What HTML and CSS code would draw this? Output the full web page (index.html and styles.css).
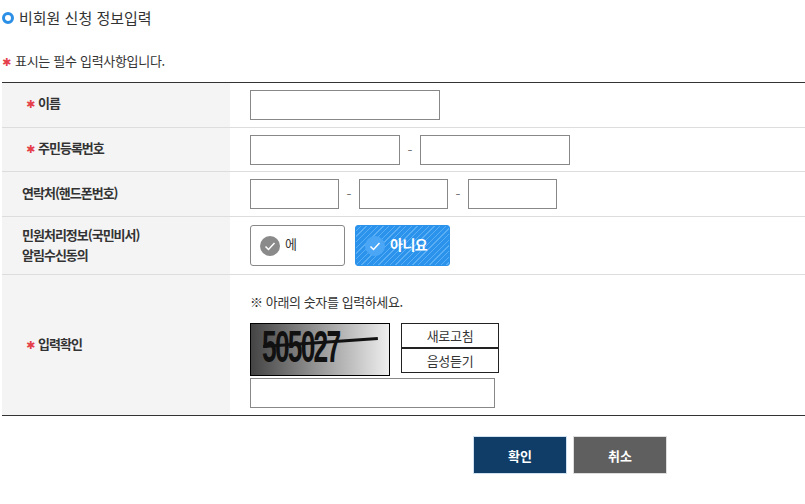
FILE: index.html
```html
<!DOCTYPE html>
<html lang="ko">
<head>
    <meta charset="UTF-8">
    <meta name="viewport" content="width=device-width, initial-scale=1.0">
    <title>비회원 신청 정보입력</title>
    <link rel="stylesheet" href="styles.css">
</head>
<body>
    <h2 class="title"><span class="dot"></span>비회원 신청 정보입력</h2>
    <p class="notice"><span class="star">✱</span>표시는 필수 입력사항입니다.</p>

    <table class="form">
        <tr class="row-name">
            <th class="indent"><span class="star">✱</span>이름</th>
            <td><input type="text" class="field w190"></td>
        </tr>
        <tr class="row-id">
            <th class="indent"><span class="star">✱</span>주민등록번호</th>
            <td>
                <div class="group">
                    <input type="text" class="field w150">
                    <span class="dash">-</span>
                    <input type="text" class="field w150">
                </div>
            </td>
        </tr>
        <tr class="row-phone">
            <th>연락처(핸드폰번호)</th>
            <td>
                <div class="group">
                    <input type="text" class="field w89">
                    <span class="dash">-</span>
                    <input type="text" class="field w89">
                    <span class="dash">-</span>
                    <input type="text" class="field w89">
                </div>
            </td>
        </tr>
        <tr class="row-agree">
            <th>민원처리정보(국민비서)<br>알림수신동의</th>
            <td>
                <div class="choices">
                    <div class="choice">
                        <svg class="check" width="20" height="20" viewBox="0 0 20 20">
                            <circle cx="10" cy="10" r="10" fill="#8a8a8a"/>
                            <path d="M5.5 10.5l3 3 6-6.500" fill="none" stroke="#fff" stroke-width="1.500"/>
                        </svg>
                        <span>에</span>
                    </div>
                    <div class="choice on">
                        <svg class="check" width="20" height="20" viewBox="0 0 20 20">
                            <circle cx="10" cy="10" r="10" fill="#4ba6f5"/>
                            <path d="M5.5 10.5l3 3 6-6.500" fill="none" stroke="#fff" stroke-width="1.500"/>
                        </svg>
                        <span>아니요</span>
                    </div>
                </div>
            </td>
        </tr>
        <tr class="row-captcha">
            <th class="indent"><span class="star">✱</span>입력확인</th>
            <td class="captcha-cell">
                <p class="hint">※ 아래의 숫자를 입력하세요.</p>
                <div class="captcha-row">
                    <div class="captcha">
                        <span class="digits">505027</span>
                        <span class="strike"></span>
                    </div>
                    <div class="captcha-btns">
                        <button>새로고침</button>
                        <button>음성듣기</button>
                    </div>
                </div>
                <input type="text" class="field w245">
            </td>
        </tr>
    </table>

    <div class="actions">
        <button class="btn ok">확인</button>
        <button class="btn cancel">취소</button>
    </div>
</body>
</html>
```

FILE: styles.css
```css
body {
    margin: 0;
    font-family: "Noto Sans CJK KR", "Noto Sans", sans-serif;
    background-color: #fff;
    color: #333;
}
.title {
    display: flex;
    align-items: center;
    margin: 0;
    padding: 3px 0 0 2px;
    height: 30px;
    font-size: 15px;
    font-weight: 400;
    line-height: 22px;
}
.dot {
    width: 6px;
    height: 6px;
    margin-right: 5px;
    border: 3px solid #2b8fe6;
    border-radius: 50%;
}
.notice {
    margin: 0;
    padding: 18px 0 0 2px;
    height: 31px;
    font-size: 13px;
    letter-spacing: -0.3px;
    line-height: 20px;
}
.star {
    display: inline-block;
    width: 12px;
    color: #e5404a;
    font-family: "DejaVu Sans", sans-serif;
    font-size: 11px;
    font-weight: 700;
    line-height: 11px;
}
.notice .star {
    width: 13px;
}
.form {
    width: 803px;
    margin-left: 2px;
    border-collapse: collapse;
    border-top: 1px solid #333;
    border-bottom: 1px solid #333;
}
.form th,
.form td {
    padding: 0;
    border-bottom: 1px solid #ddd;
}
.form tr:last-child th,
.form tr:last-child td {
    border-bottom: none;
}
.form th {
    box-sizing: border-box;
    width: 228px;
    padding: 0 0 2px 20px;
    background: #f4f4f4;
    font-size: 13px;
    font-weight: 700;
    letter-spacing: -1px;
    line-height: 20px;
    text-align: left;
}
.form th.indent {
    padding-left: 24px;
}
.form td {
    padding-left: 20px;
}
.form td.captcha-cell {
    padding: 17px 0 7px 20px;
    vertical-align: top;
}
.row-name { height: 45px; }
.row-name th { padding-bottom: 4px; }
.row-id { height: 44px; }
.row-id th { padding-bottom: 3px; }
.row-phone { height: 45px; }
.row-agree { height: 58px; }
.row-captcha { height: 140px; }
.field {
    display: block;
    box-sizing: border-box;
    height: 30px;
    padding: 0 8px;
    border: 1px solid #888;
    background: #fff;
}
.w190 { width: 190px; }
.w150 { width: 150px; }
.w89 { width: 89px; }
.w245 { width: 245px; margin-top: 2px; }
.group {
    display: flex;
    align-items: center;
}
.dash {
    width: 20px;
    color: #777;
    font-size: 14px;
    text-align: center;
}
.choices {
    display: flex;
    gap: 10px;
}
.choice {
    display: flex;
    align-items: center;
    box-sizing: border-box;
    width: 95px;
    height: 41px;
    padding-left: 9px;
    border: 1px solid #888;
    border-radius: 3px;
    font-size: 13px;
    letter-spacing: -0.5px;
}
.choice span {
    margin: -4px 0 0 5px;
}
.choice.on {
    border-color: #2b93ec;
    background: repeating-linear-gradient(135deg, #2b93ec 0, #2b93ec 3px, #5aaef3 3px, #5aaef3 4px);
    color: #fff;
    font-size: 14px;
    font-weight: 700;
}
.hint {
    margin: 0 0 11px;
    font-size: 13px;
    letter-spacing: -0.4px;
    line-height: 20px;
}
.captcha-row {
    display: flex;
    align-items: flex-start;
    gap: 11px;
}
.captcha {
    position: relative;
    box-sizing: border-box;
    width: 140px;
    height: 53px;
    border: 1px solid #000;
    background: linear-gradient(90deg, #444, #eee);
    overflow: hidden;
}
.digits {
    display: block;
    margin-left: 11px;
    color: #111;
    font-family: "Liberation Sans", sans-serif;
    font-size: 44px;
    font-weight: 700;
    letter-spacing: -3px;
    line-height: 46px;
    transform: scaleX(0.6);
    transform-origin: left center;
}
.strike {
    position: absolute;
    left: 12px;
    top: 17px;
    width: 115px;
    height: 3px;
    background: #111;
    transform: rotate(-4deg);
}
.captcha-btns {
    display: flex;
    flex-direction: column;
}
.captcha-btns button {
    box-sizing: border-box;
    width: 98px;
    height: 25px;
    border: 1px solid #222;
    background: #fff;
    color: #333;
    font-family: inherit;
    font-size: 13px;
    letter-spacing: -0.3px;
}
.actions {
    display: flex;
    gap: 6px;
    margin-top: 20px;
    padding-left: 473px;
}
.btn {
    width: 94px;
    height: 38px;
    border: 1px solid #ddd;
    color: #fff;
    font-family: inherit;
    font-size: 13px;
    font-weight: 700;
}
.ok {
    border-color: #cfe0ee;
    background: #0f3d68;
}
.cancel {
    background: #5f5f5f;
}
```
